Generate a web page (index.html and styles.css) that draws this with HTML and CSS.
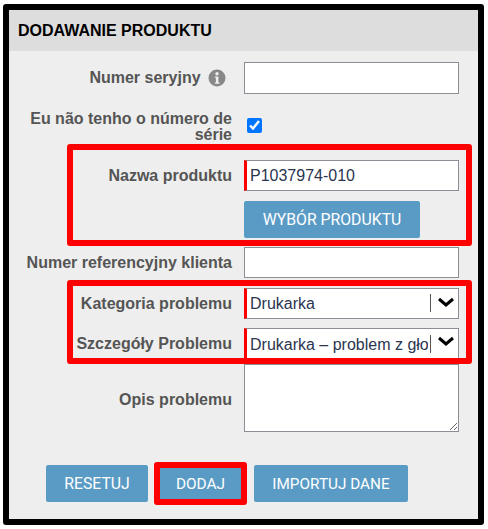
FILE: index.html
```html
<!DOCTYPE html>
<html>
<head>
<meta name="viewport" content="width=device-width, initial-scale=1">
<link rel="stylesheet" href="styles.css">
</head>
<body>

<div class="frame">
  <h2 class="title">DODAWANIE PRODUKTU</h2>

  <form class="product-form">
    <div class="row row-serial">
      <label class="row-label">Numer seryjny
        <svg class="info-icon" width="18" height="18" viewBox="0 0 18 18">
          <circle cx="9" cy="9" r="8.5" fill="#888"/>
          <circle cx="9" cy="4.8" r="1.7" fill="#eee"/>
          <path d="M6.8 7.4h3.6v6h1.1v1.3h-4.7v-1.3h1.1v-4.7h-1.1z" fill="#eee"/>
        </svg>
      </label>
      <input class="field" type="text">
    </div>

    <div class="row row-check">
      <label class="row-label">Eu não tenho o número de série</label>
      <input class="check" type="checkbox" checked>
    </div>

    <div class="row row-name">
      <label class="row-label">Nazwa produktu</label>
      <input class="field required" type="text" value="P1037974-010">
    </div>

    <div class="row row-pick">
      <span class="row-label"></span>
      <button class="btn btn-pick" type="button">WYBÓR PRODUKTU</button>
    </div>

    <div class="row row-ref">
      <label class="row-label">Numer referencyjny klienta</label>
      <input class="field" type="text">
    </div>

    <div class="row row-category">
      <label class="row-label">Kategoria problemu</label>
      <div class="select-wrap">
        <select class="field required select">
          <option>Drukarka</option>
        </select>
        <span class="select-arrow">
          <svg width="18" height="10" viewBox="0 0 18 10"><path d="M2 2l7 6 7-6" fill="none" stroke="#000" stroke-width="3"/></svg>
        </span>
      </div>
    </div>

    <div class="row row-details">
      <label class="row-label">Szczegóły Problemu</label>
      <div class="select-wrap">
        <select class="field required select">
          <option>Drukarka – problem z głowicą drukującą</option>
        </select>
        <span class="select-arrow">
          <svg width="18" height="10" viewBox="0 0 18 10"><path d="M2 2l7 6 7-6" fill="none" stroke="#000" stroke-width="3"/></svg>
        </span>
      </div>
    </div>

    <div class="row row-desc">
      <label class="row-label">Opis problemu</label>
      <textarea class="field area"></textarea>
    </div>

    <div class="actions">
      <button class="btn btn-reset" type="button">RESETUJ</button>
      <button class="btn btn-add" type="button">DODAJ</button>
      <button class="btn btn-import" type="button">IMPORTUJ DANE</button>
    </div>
  </form>

  <!-- red annotations drawn over the form -->
  <div class="mark mark-name"></div>
  <div class="mark mark-problem"></div>
  <div class="mark mark-add"></div>
</div>

</body>
</html>
```

FILE: styles.css
```css
* {
  box-sizing: border-box;
}

body {
  margin: 0;
  padding: 4px 4px 0 3px;
  font-family: "Liberation Sans", Arial, sans-serif;
}

.frame {
  position: relative;
  width: 481px;
  height: 521px;
  border: 6px solid #000;
  border-radius: 3px;
  background-color: #eee;
}

.title {
  margin: 0;
  height: 41px;
  padding: 12px 9px 0;
  background-color: #ddd;
  font-size: 16px;
  line-height: 17px;
  color: #000;
}

.product-form {
  padding-top: 11px;
}

.row {
  display: flex;
  align-items: center;
}

.row-label {
  flex: none;
  width: 223px;
  margin-right: 12px;
  text-align: right;
  font-size: 16px;
  font-weight: bold;
  line-height: 16px;
  color: #555;
}

.row-serial {
  height: 32px;
  margin-bottom: 16px;
}

.row-serial .row-label {
  margin-right: 18px;
  width: 217px;
  white-space: nowrap;
}

.info-icon {
  vertical-align: -4px;
  margin-left: 3px;
}

.row-check {
  height: 34px;
  margin-bottom: 16px;
}

.row-name {
  height: 31px;
  margin-bottom: 10px;
}

.row-pick {
  height: 37px;
  margin-bottom: 9px;
}

.row-ref {
  height: 31px;
  margin-bottom: 10px;
}

.row-category {
  height: 31px;
  margin-bottom: 9px;
}

.row-details {
  height: 32px;
  margin-bottom: 4px;
}

.row-desc {
  height: 68px;
  margin-bottom: 33px;
}

.row-desc .row-label {
  padding-top: 4px;
}

.field {
  width: 215px;
  height: 100%;
  padding: 0 3px;
  border: 1px solid #8a8f96;
  border-radius: 0;
  background-color: #fff;
  font-family: "Liberation Sans", Arial, sans-serif;
  font-size: 16px;
  color: #2b3550;
  outline: none;
}

.required {
  border-left: 3px solid #f00;
}

.area {
  display: block;
}

.check {
  width: 15px;
  height: 15px;
  margin: 0 0 4px 3px;
}

.select-wrap {
  position: relative;
  width: 215px;
  height: 100%;
}

.select {
  appearance: none;
  display: block;
  padding-right: 30px;
}

.select-arrow {
  position: absolute;
  top: 6px;
  right: 28px;
  width: 0;
  height: 18px;
  border-left: 1px solid #555;
  pointer-events: none;
}

.select-arrow svg {
  position: absolute;
  top: 3px;
  left: 6px;
}

.row-details .select-arrow {
  top: 7px;
}

.row-details .select-arrow svg {
  top: 1px;
}

.btn {
  height: 37px;
  padding: 0;
  border: 0;
  border-radius: 2px;
  background-color: #5a9bc5;
  font-family: Roboto, Arial, sans-serif;
  font-size: 15.8px;
  color: #fff;
}

.btn-pick {
  width: 176px;
}

.actions {
  display: flex;
  padding-left: 37px;
}

.btn-reset {
  width: 102px;
  margin-right: 12px;
}

.btn-add {
  width: 81px;
  margin-right: 13px;
  font-size: 15.4px;
}

.btn-import {
  width: 154px;
  font-size: 15.3px;
}

.mark {
  position: absolute;
  border: 6px solid #f00;
  border-radius: 3px;
}

.mark-name {
  left: 58px;
  top: 134px;
  width: 405px;
  height: 102px;
}

.mark-problem {
  left: 58px;
  top: 270px;
  width: 405px;
  height: 84px;
}

.mark-add {
  left: 145px;
  top: 452px;
  width: 93px;
  height: 43px;
}
```
